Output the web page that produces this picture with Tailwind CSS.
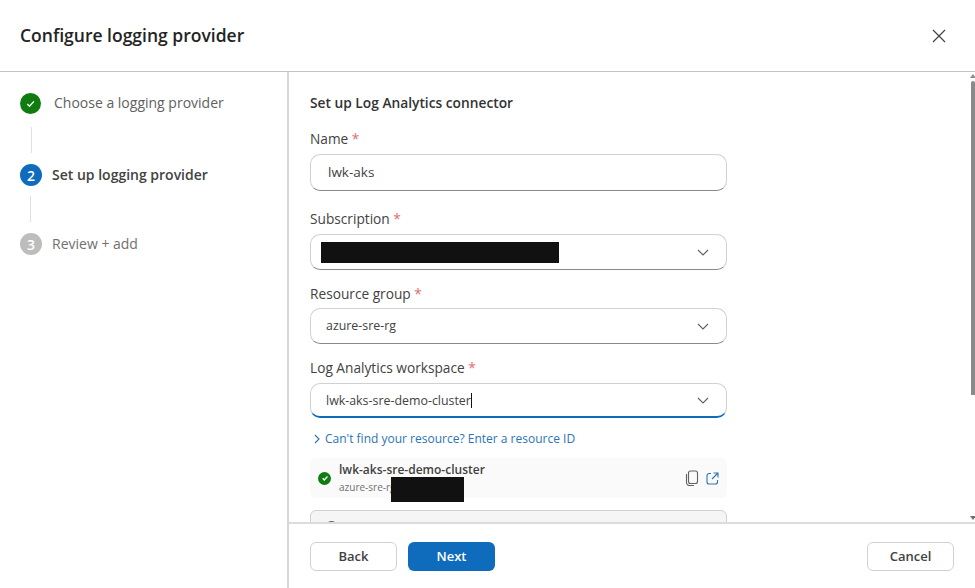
<!DOCTYPE html>
<html lang="en">
<head>
  <meta charset="UTF-8" />
  <title>Configure logging provider</title>
  <script src="https://cdn.jsdelivr.net/npm/@tailwindcss/browser@4"></script>
</head>
<body class="bg-white font-['Open_Sans',sans-serif] text-[#242424]">
  <div class="w-[975px] h-[588px] flex flex-col overflow-hidden">
    <!-- Header -->
    <div class="h-[72px] shrink-0 flex items-center justify-between pl-5 pr-[29px] border-b border-[#c4c4c4]">
      <h1 class="text-[17.5px] font-semibold pb-[1px]">Configure logging provider</h1>
      <svg class="w-[14px] h-[14px]" viewBox="0 0 14 14" fill="none" stroke="#424242" stroke-width="1.2"><path d="M1 1l12 12M13 1L1 13" /></svg>
    </div>

    <div class="flex flex-1 min-h-0">
      <!-- Stepper -->
      <div class="w-[289px] shrink-0 border-r-2 border-[#d6d6d6] pl-5 pt-[20px]">
        <div class="flex items-center h-[22px]">
          <span class="w-[21px] h-[21px] rounded-full bg-[#107c10] flex items-center justify-center">
            <svg class="w-[11px] h-[11px]" viewBox="0 0 12 12" fill="none" stroke="white" stroke-width="1.5"><path d="M2.5 6.5l2.4 2.4 4.8-5.2" /></svg>
          </span>
          <span class="ml-[13px] pb-[2px] text-[14px] text-[#616161]">Choose a logging provider</span>
        </div>
        <div class="ml-[11px] w-px h-[26px] mt-[13px] mb-[11px] bg-[#e0e0e0]"></div>
        <div class="flex items-center h-[22px]">
          <span class="w-[22px] h-[22px] rounded-full bg-[#0f6cbd] text-white text-[14px] font-semibold flex items-center justify-center">2</span>
          <span class="ml-[10px] pb-[1px] text-[14px] font-semibold text-[#424242]">Set up logging provider</span>
        </div>
        <div class="ml-[10px] w-px h-[26px] mt-[10px] mb-[11px] bg-[#e0e0e0]"></div>
        <div class="flex items-center h-[22px]">
          <span class="w-[22px] h-[22px] rounded-full bg-[#bdbdbd] text-white text-[14px] font-semibold flex items-center justify-center">3</span>
          <span class="ml-[10px] pb-[1px] text-[14px] text-[#707070]">Review + add</span>
        </div>
      </div>

      <!-- Right side -->
      <div class="flex-1 min-w-0 flex flex-col">
        <div class="relative h-[450px] shrink-0 overflow-hidden pl-[21px]">
          <h2 class="mt-[21px] h-5 leading-5 text-[13.75px] font-semibold text-[#333]">Set up Log Analytics connector</h2>

          <div class="mt-[16px] h-5 leading-5 text-[13.7px] text-[#424242]">Name <span class="text-[#e06c6f]">*</span></div>
          <div class="mt-[5px] w-[417px] h-[37px] flex items-center pl-[17px] rounded-[10px] border border-[#d1d1d1] border-b-[#8a8a8a] text-[13.5px] text-[#424242]">lwk-aks</div>

          <div class="mt-[18px] h-5 leading-5 text-[13.7px] text-[#424242]">Subscription <span class="text-[#e06c6f]">*</span></div>
          <div class="mt-[5px] w-[417px] h-[36px] flex items-center justify-between pl-[10px] pr-[17px] rounded-[10px] border border-[#d1d1d1] border-b-[#8a8a8a]">
            <div class="w-[238px] h-[21px] bg-[#111]"></div>
            <svg class="w-3 h-[7px]" viewBox="0 0 12 7" fill="none" stroke="#616161" stroke-width="1.1"><path d="M1 1l5 5 5-5" /></svg>
          </div>

          <div class="mt-[14px] h-5 leading-5 text-[13.7px] text-[#424242]">Resource group <span class="text-[#e06c6f]">*</span></div>
          <div class="mt-[4px] w-[417px] h-[36px] flex items-center justify-between pl-[15px] pr-[17px] rounded-[10px] border border-[#d1d1d1] border-b-[#8a8a8a] text-[12.4px] text-[#424242]">
            <span class="pt-[1px]">azure-sre-rg</span>
            <svg class="w-3 h-[7px]" viewBox="0 0 12 7" fill="none" stroke="#616161" stroke-width="1.1"><path d="M1 1l5 5 5-5" /></svg>
          </div>

          <div class="mt-[14px] h-5 leading-5 text-[13.7px] text-[#424242]">Log Analytics workspace <span class="text-[#e06c6f]">*</span></div>
          <div class="mt-[5px] w-[417px] h-[35px] flex items-center justify-between pl-[15px] pr-[17px] rounded-[10px] border border-[#d1d1d1] border-b-2 border-b-[#0f6cbd] text-[12.4px] text-[#424242]">
            <span class="flex items-center pt-[2px]">lwk-aks-sre-demo-cluster<span class="w-px h-[15px] bg-[#111]"></span></span>
            <svg class="w-3 h-[7px]" viewBox="0 0 12 7" fill="none" stroke="#616161" stroke-width="1.1"><path d="M1 1l5 5 5-5" /></svg>
          </div>

          <div class="mt-[11px] h-5 flex items-center pl-[4px] text-[12px] text-[#2b74b5]">
            <svg class="w-[6px] h-[10px] mr-[5px]" viewBox="0 0 6 10" fill="none" stroke="#2b74b5" stroke-width="1.1"><path d="M1 1l4 4-4 4" /></svg>
            <span>Can't find your resource? Enter a resource ID</span>
          </div>

          <!-- Selected workspace -->
          <div class="relative mt-[9px] w-[417px] h-[40px] rounded-[6px] bg-[#fafafa] flex items-center pl-[8px] pr-[8px]">
            <span class="w-[13px] h-[13px] rounded-full bg-[#107c10] flex items-center justify-center">
              <svg class="w-2 h-2" viewBox="0 0 12 12" fill="none" stroke="white" stroke-width="2"><path d="M2.5 6.5l2.4 2.4 4.8-5.2" /></svg>
            </span>
            <div class="ml-[8px] flex-1">
              <div class="text-[12px] leading-[16px] font-semibold text-[#424242]">lwk-aks-sre-demo-cluster</div>
              <div class="mt-[2px] text-[10px] leading-[14px] text-[#707070]">azure-sre-rg</div>
            </div>
            <svg class="w-[14px] h-[16px] mr-[7px]" viewBox="0 0 14 16" fill="none" stroke="#616161" stroke-width="1.1"><rect x="3.5" y="1" width="9" height="12.5" rx="2" /><path d="M1.5 4v8.5a3 3 0 0 0 3 3H9" /></svg>
            <svg class="w-[13px] h-[13px]" viewBox="0 0 13 13" fill="none" stroke="#2b74b5" stroke-width="1.1"><path d="M5 1.5H3A2 2 0 0 0 1 3.5v6.5a2 2 0 0 0 2 2h6.5a2 2 0 0 0 2-2V8M7.5 1H12v4.5M12 1L6 7" /></svg>
            <div class="absolute left-[81px] top-[19px] w-[73px] h-[25px] bg-[#111]"></div>
          </div>

          <!-- Clipped notice -->
          <div class="relative mt-[12px] w-[417px] h-[40px] rounded-[6px] bg-[#f5f5f5] border border-[#d1d1d1]">
            <span class="absolute left-[14px] top-[10px] w-[13px] h-[13px] rounded-full bg-[#616161]"></span>
          </div>

          <!-- Scrollbar -->
          <div class="absolute right-0 top-0 bottom-0 w-[5px]">
            <div class="absolute top-[2px] left-0 w-0 h-0 border-x-[3px] border-x-transparent border-b-[4px] border-b-[#8a8a8a]"></div>
            <div class="absolute top-[9px] left-[1px] w-[4px] h-[314px] rounded-t-[2px] bg-[#8a8a8a]"></div>
            <div class="absolute bottom-[2px] left-0 w-0 h-0 border-x-[3px] border-x-transparent border-t-[4px] border-t-[#6e6e6e]"></div>
          </div>
        </div>

        <!-- Footer -->
        <div class="flex-1 border-t-2 border-[#dcdcdc] flex items-start pt-[18px] pl-[21px] pr-[21px]">
          <button class="w-[87px] h-[29px] rounded-[6px] border border-[#d1d1d1] bg-white text-[13px] font-semibold text-[#424242]">Back</button>
          <button class="ml-[11px] w-[87px] h-[29px] rounded-[6px] bg-[#0f6cbd] text-[13px] font-semibold text-white">Next</button>
          <button class="ml-auto w-[87px] h-[29px] rounded-[6px] border border-[#d1d1d1] bg-white text-[13px] font-semibold text-[#424242]">Cancel</button>
        </div>
      </div>
    </div>
  </div>
</body>
</html>
